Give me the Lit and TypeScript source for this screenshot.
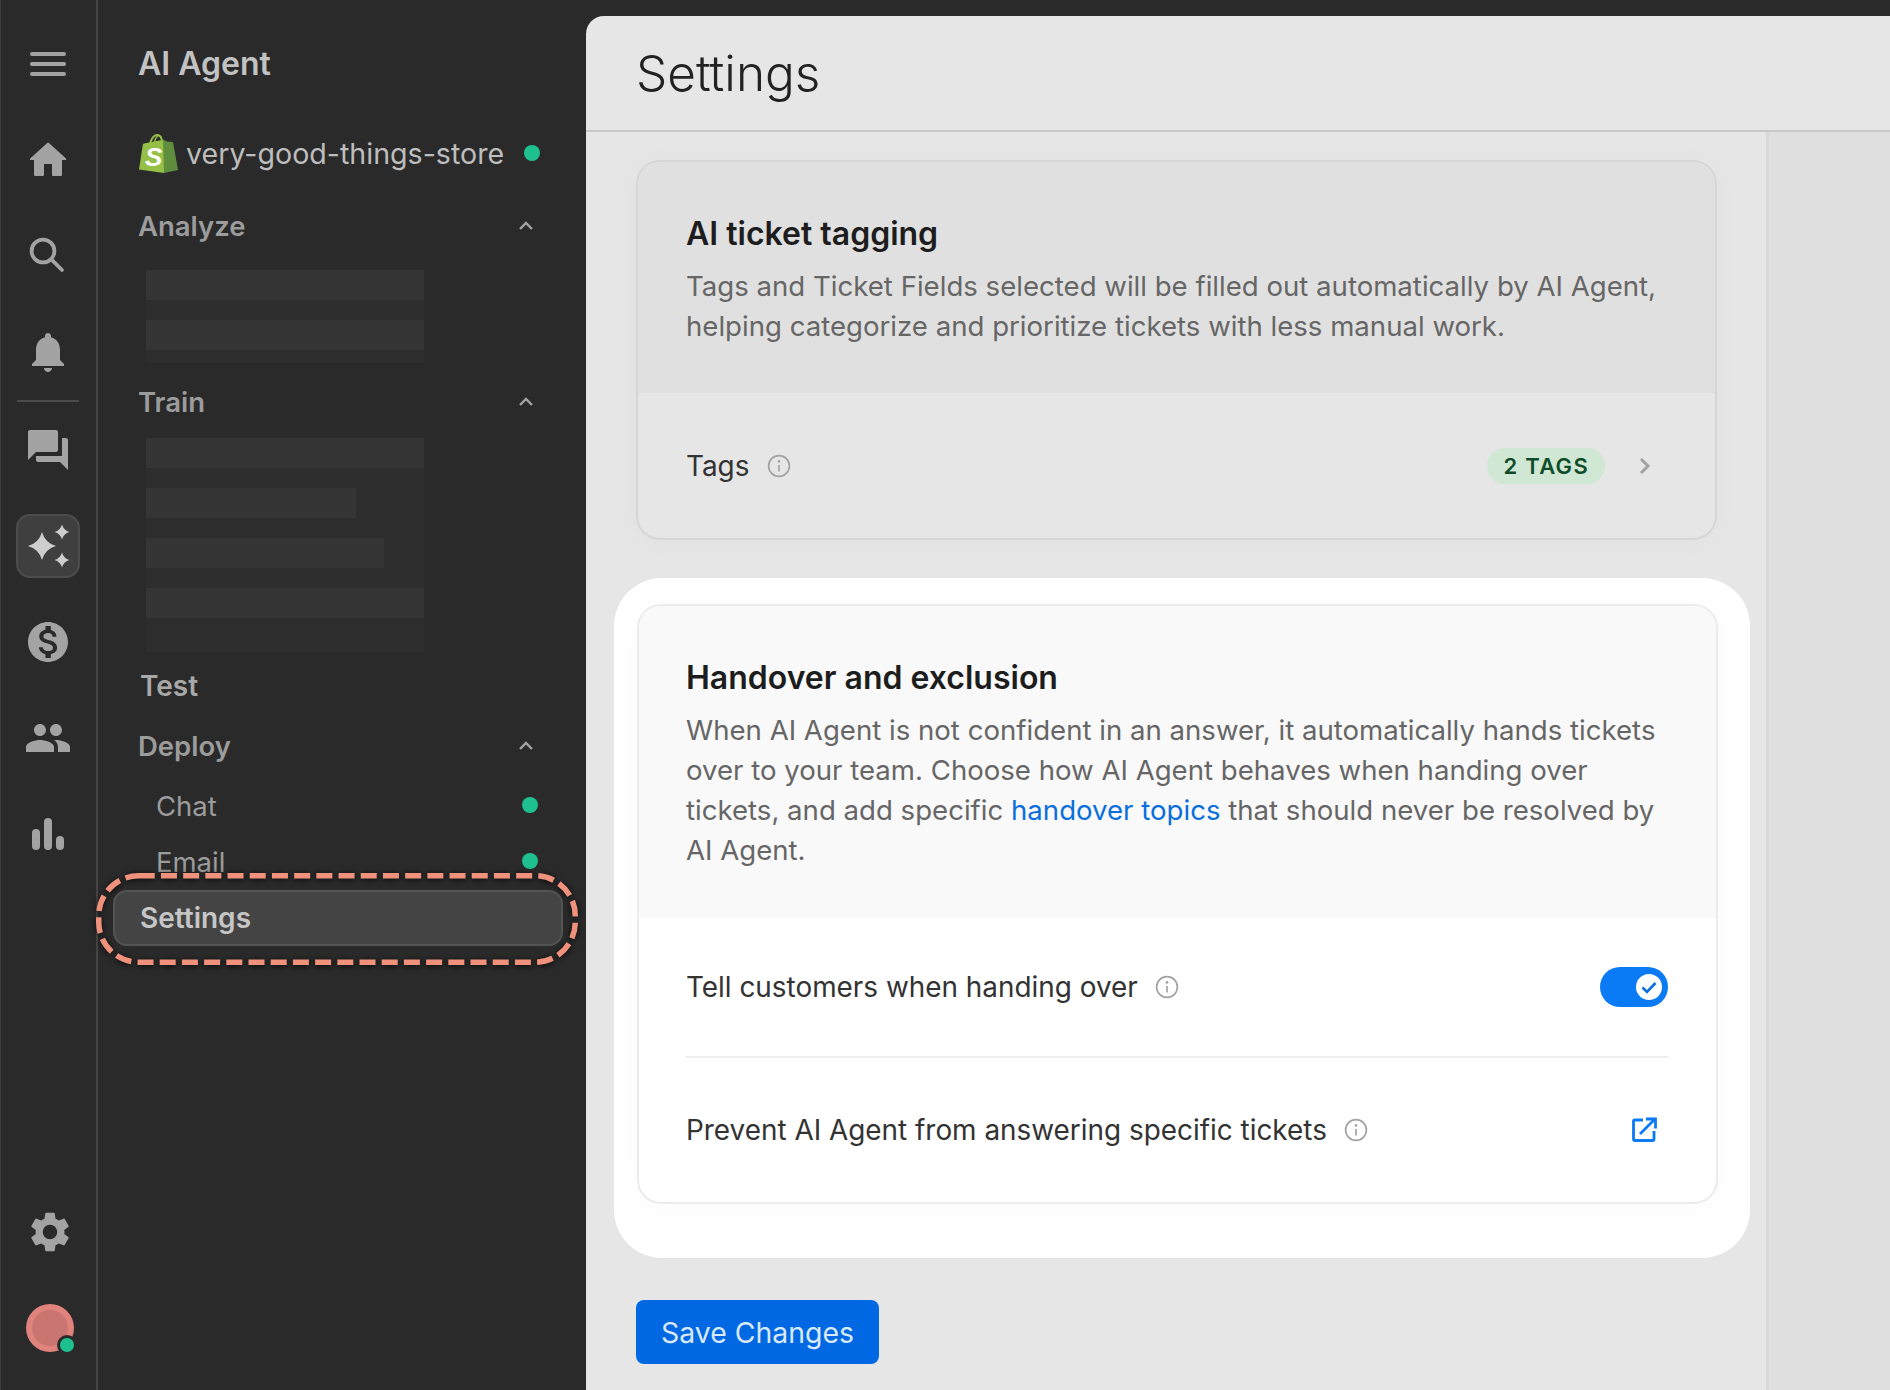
import { LitElement, css, html, svg } from 'lit'
import { customElement } from 'lit/decorators.js'

const icon = (d: string) => html`<svg class="ico" viewBox="0 0 24 24"><path d=${d}></path></svg>`

const HOME = 'M10 19.2v-5.2h4v5.2c0 .5.3.8.8.8h3.4c.5 0 .8-.3.8-.8V12h1.7c.4 0 .6-.5.3-.8l-8.4-7.6c-.3-.3-.8-.3-1.1 0l-8.4 7.6c-.3.3-.1.8.3.8H5v7.2c0 .5.3.8.8.8h3.4c.5 0 .8-.3.8-.8z'
const BELL = 'M12 22c1.1 0 2-.9 2-2h-4c0 1.1.89 2 2 2zm6-6v-5c0-3.07-1.64-5.64-4.5-6.32V4c0-.83-.67-1.5-1.5-1.5s-1.5.67-1.5 1.5v.68C7.63 5.36 6 7.92 6 11v5l-2 2v1h16v-1l-2-2z'
const FORUM = 'M21 6h-2v9H6v2c0 .55.45 1 1 1h11l4 4V7c0-.55-.45-1-1-1zm-4 6V3c0-.55-.45-1-1-1H3c-.55 0-1 .45-1 1v14l4-4h10c.55 0 1-.45 1-1z'
const DOLLAR = 'M12 2C6.48 2 2 6.48 2 12s4.48 10 10 10 10-4.48 10-10S17.52 2 12 2zm1.41 16.09V20h-2.67v-1.93c-1.71-.36-3.16-1.46-3.27-3.4h1.96c.1 1.05.82 1.87 2.65 1.87 1.96 0 2.4-.98 2.4-1.59 0-.83-.44-1.61-2.67-2.14-2.48-.6-4.18-1.62-4.18-3.67 0-1.72 1.39-2.84 3.11-3.21V4h2.67v1.95c1.86.45 2.79 1.86 2.85 3.39H14.3c-.05-1.11-.64-1.87-2.22-1.87-1.5 0-2.4.68-2.4 1.64 0 .84.65 1.39 2.67 1.91s4.18 1.39 4.18 3.91c-.01 1.83-1.38 2.83-3.12 3.16z'
const GROUP = 'M16 11c1.66 0 2.99-1.34 2.99-3S17.66 5 16 5c-1.66 0-3 1.34-3 3s1.34 3 3 3zm-8 0c1.66 0 2.99-1.34 2.99-3S9.66 5 8 5C6.34 5 5 6.34 5 8s1.34 3 3 3zm0 2c-2.33 0-7 1.17-7 3.5V19h14v-2.5c0-2.33-4.67-3.5-7-3.5zm8 0c-.29 0-.62.02-.97.05 1.16.84 1.97 1.97 1.97 3.45V19h6v-2.5c0-2.33-4.67-3.5-7-3.5z'
const GEAR = 'M19.14 12.94c.04-.3.06-.61.06-.94 0-.32-.02-.64-.07-.94l2.03-1.58c.18-.14.23-.41.12-.61l-1.92-3.32c-.12-.22-.37-.29-.59-.22l-2.39.96c-.5-.38-1.03-.7-1.62-.94l-.36-2.54c-.04-.24-.24-.41-.48-.41h-3.84c-.24 0-.43.17-.47.41l-.36 2.54c-.59.24-1.13.57-1.62.94l-2.39-.96c-.22-.08-.47 0-.59.22L2.74 8.87c-.12.21-.08.47.12.61l2.03 1.58c-.05.3-.09.63-.09.94s.02.64.07.94l-2.03 1.58c-.18.14-.23.41-.12.61l1.92 3.32c.12.22.37.29.59.22l2.39-.96c.5.38 1.03.7 1.62.94l.36 2.54c.05.24.24.41.48.41h3.84c.24 0 .44-.17.47-.41l.36-2.54c.59-.24 1.13-.56 1.62-.94l2.39.96c.22.08.47 0 .59-.22l1.92-3.32c.12-.22.07-.47-.12-.61l-2.01-1.58zM12 15.6c-1.98 0-3.6-1.62-3.6-3.6s1.62-3.6 3.6-3.6 3.6 1.62 3.6 3.6-1.62 3.6-3.6 3.6z'

const star = (cx: number, cy: number, r: number) => {
  const k = r * 0.22
  return svg`<path d="M${cx} ${cy - r}Q${cx + k} ${cy - k} ${cx + r} ${cy}Q${cx + k} ${cy + k} ${cx} ${cy + r}Q${cx - k} ${cy + k} ${cx - r} ${cy}Q${cx - k} ${cy - k} ${cx} ${cy - r}z"></path>`
}

const chevUp = html`<svg class="chev" viewBox="0 0 16 10"><path d="M2 8l6-6 6 6"></path></svg>`

const info = html`<svg class="info" viewBox="0 0 24 24">
  <circle cx="12" cy="12" r="10.4"></circle>
  <path d="M12 11v6.4"></path>
  <circle class="dot-i" cx="12" cy="7.4" r="1.3"></circle>
</svg>`

const skeleton = (widths: number[], height: number) => html`
  <div class="skeleton" style="height:${height}px">
    ${widths.map((w) => html`<div class="bar" style="width:${w}px"></div>`)}
  </div>
`

@customElement('app-root')
export class AppRoot extends LitElement {
  static styles = css`
    :host {
      display: flex;
      width: 1890px;
      height: 1390px;
      overflow: hidden;
      background: #2a2a2a;
      font-family: Inter, "Liberation Sans", sans-serif;
      box-sizing: border-box;
      border-left: 1px solid #3d3d3d;
    }
    * {
      box-sizing: border-box;
    }

    /* icon rail */
    .rail {
      width: 97px;
      flex: none;
      border-right: 2px solid #454545;
      display: flex;
      flex-direction: column;
      padding: 16px 1px 14px 0;
    }
    .slot {
      height: 96px;
      flex: none;
      display: flex;
      align-items: center;
      justify-content: center;
    }
    .ico {
      width: 48px;
      height: 48px;
      fill: #a3a3a3;
      display: block;
    }
    .burger {
      width: 36px;
      height: 24px;
      display: flex;
      flex-direction: column;
      justify-content: space-between;
    }
    .burger i {
      height: 4px;
      border-radius: 2px;
      background: #a3a3a3;
    }
    .rule {
      height: 2px;
      margin: 0 16px;
      background: #4a4a4a;
      flex: none;
    }
    .tile {
      width: 64px;
      height: 64px;
      border-radius: 14px;
      background: #3f3f3f;
      border: 2px solid #4c4c4c;
      display: flex;
      align-items: center;
      justify-content: center;
    }
    .tile svg {
      width: 64px;
      height: 64px;
      flex: none;
      fill: #cdcdcd;
    }
    .search {
      width: 48px;
      height: 48px;
      fill: none;
      stroke: #a3a3a3;
      stroke-width: 1.9;
      stroke-linecap: round;
    }
    .bars {
      width: 32px;
      height: 32px;
      display: flex;
      align-items: flex-end;
      justify-content: space-between;
    }
    .bars i {
      width: 8px;
      border-radius: 4px;
      background: #a3a3a3;
    }
    .spring {
      flex: 1;
    }
    .gear {
      margin-left: 4px;
    }
    .avatar {
      position: relative;
      width: 48px;
      height: 48px;
      margin-left: 4px;
      border-radius: 50%;
      background: #e0837c;
      display: flex;
      align-items: center;
      justify-content: center;
    }
    .avatar::before {
      content: "";
      width: 36px;
      height: 36px;
      border-radius: 50%;
      background: #c97670;
    }
    .avatar::after {
      content: "";
      position: absolute;
      right: 0;
      bottom: 0;
      width: 14px;
      height: 14px;
      border-radius: 50%;
      background: #1fc08f;
      box-shadow: 0 0 0 3px #2a2a2a;
    }

    /* navigation */
    .side {
      width: 488px;
      flex: none;
      padding: 39px 23px 0 40px;
      display: flex;
      flex-direction: column;
      color: #9c9c9c;
      font-size: 27.5px;
    }
    .title {
      height: 49px;
      line-height: 50px;
      font-size: 32px;
      font-weight: 600;
      color: #c2c2c2;
    }
    .store {
      height: 60px;
      margin-top: 35px;
      display: flex;
      align-items: center;
      color: #bdbdbd;
      white-space: nowrap;
      font-size: 28.6px;
    }
    .store svg {
      width: 40px;
      height: 40px;
      margin-right: 8px;
      flex: none;
    }
    .live {
      width: 16px;
      height: 16px;
      border-radius: 50%;
      background: #1fc08f;
      flex: none;
    }
    .store .live {
      margin-left: 20px;
    }
    .sub .live {
      margin-top: -2px;
    }
    .group {
      height: 48px;
      display: flex;
      align-items: center;
      justify-content: space-between;
      font-weight: 600;
      padding: 0 29px 2px 0;
    }
    .chev {
      width: 16px;
      height: 10px;
      fill: none;
      stroke: #a3a3a3;
      stroke-width: 2.4;
    }
    .skeleton {
      margin-left: 8px;
      width: 278px;
      background: #2d2d2d;
      display: flex;
      flex-direction: column;
      gap: 20px;
      flex: none;
    }
    .bar {
      height: 30px;
      background: #353535;
    }
    .test {
      padding-left: 2px;
      color: #a8a8a8;
      font-size: 28px;
    }
    .sub {
      height: 56px;
      display: flex;
      align-items: center;
      justify-content: space-between;
      padding: 0 25px 0 18px;
    }
    .current {
      position: relative;
      height: 56px;
      margin-left: -25px;
      margin-right: 0;
      padding-left: 25px;
      border-radius: 14px;
      border: 2px solid #545454;
      background: #444444;
      display: flex;
      align-items: center;
      font-weight: 600;
      font-size: 28px;
      color: #c6c6c6;
    }
    .mark {
      position: absolute;
      left: -19px;
      top: -19px;
      width: 482px;
      height: 92px;
      overflow: visible;
      filter: drop-shadow(0 1px 3px rgba(0, 0, 0, 0.85));
    }
    .mark rect {
      fill: none;
      stroke: #f0917c;
      stroke-width: 5.5;
      stroke-dasharray: 16 6.2;
    }

    /* main panel */
    .main {
      flex: 1;
      min-width: 0;
      border-top-left-radius: 18px;
      margin-top: 16px;
      background: #e6e6e6;
      display: flex;
      flex-direction: column;
    }
    .head {
      height: 116px;
      flex: none;
      padding: 0 0 1px 50px;
      border-bottom: 2px solid #c8c8c8;
      display: flex;
      align-items: center;
      font-size: 49.5px;
      font-weight: 350;
      color: #222222;
    }
    .body {
      flex: 1;
      display: flex;
      min-height: 0;
    }
    .content {
      width: 1183px;
      flex: none;
      padding: 28px 0 0 28px;
      border-right: 3px solid #d8d8d8;
    }
    .sideband {
      flex: 1;
      background: #dfdfdf;
    }
    .card {
      margin-left: 22px;
      width: 1081px;
      border: 2px solid #d6d6d6;
      border-radius: 24px;
      overflow: hidden;
      background: #e6e6e6;
      box-shadow: 0 2px 30px rgba(0, 0, 0, 0.025);
    }
    .card-head {
      background: #e0e0e0;
      padding: 52px 48px 47px;
    }
    .card h2 {
      margin: 0 0 12px;
      font-size: 32px;
      line-height: 40px;
      font-weight: 600;
      color: #1d1d1d;
    }
    .card p {
      margin: 0;
      font-size: 27.6px;
      line-height: 40px;
      color: #666666;
    }
    .row {
      display: flex;
      align-items: center;
      margin: 0 48px 0 48px;
      font-size: 27.9px;
      color: #333333;
    }
    .row .info {
      margin-left: 18px;
    }
    .row .push {
      margin-left: auto;
    }
    .tags {
      height: 145px;
      margin-right: 64px;
    }
    .info {
      width: 24px;
      height: 24px;
      flex: none;
      fill: none;
      stroke: #a3a3a3;
      stroke-width: 1.7;
    }
    .dot-i {
      fill: #a3a3a3;
      stroke: none;
    }
    .badge {
      height: 36px;
      border-radius: 18px;
      background: #cfe7d3;
      color: #0f4d2a;
      font-size: 22px;
      font-weight: 600;
      letter-spacing: 1.3px;
      padding: 0 16px;
      display: flex;
      align-items: center;
    }
    .go {
      width: 12px;
      height: 20px;
      margin-left: 34px;
      fill: none;
      stroke: #a3a3a3;
      stroke-width: 3;
    }
    .spot {
      margin-top: 38px;
      width: 1136px;
      height: 680px;
      padding-top: 26px;
      background: #ffffff;
      border-radius: 48px;
    }
    .spot .card {
      margin-left: 23px;
      width: 1081px;
      background: #ffffff;
      border-color: #ececec;
    }
    .spot .card-head {
      background: #f9f9f9;
      padding: 52px 47px 48px;
    }
    .spot a {
      color: #0a6fdc;
      text-decoration: none;
    }
    .spot .row {
      height: 138px;
      margin: 0 48px 0 47px;
    }
    .spot .row .info {
      margin-left: 17px;
    }
    .spot .row + .row {
      height: 146px;
      border-top: 2px solid #eeeeee;
    }
    .switch {
      width: 68px;
      height: 40px;
      border-radius: 20px;
      background: #0a7bf5;
      display: flex;
      align-items: center;
      justify-content: flex-end;
      padding-right: 6px;
    }
    .switch svg {
      width: 26px;
      height: 26px;
    }
    .ext {
      width: 26px;
      height: 26px;
      margin-right: 11px;
      fill: none;
      stroke: #0a7bf5;
      stroke-width: 2.8;
    }
    .save {
      margin: 42px 0 0 22px;
      width: 243px;
      height: 64px;
      border: 0;
      border-radius: 8px;
      background: #0068e3;
      color: #d9e9fc;
      font: 400 28.4px Inter, "Liberation Sans", sans-serif;
      display: block;
    }
  `

  render() {
    return html`
      <div class="rail">
        <div class="slot"><div class="burger"><i></i><i></i><i></i></div></div>
        <div class="slot">${icon(HOME)}</div>
        <div class="slot">
          <svg class="search" viewBox="0 0 24 24"><circle cx="9.500" cy="9.500" r="5.700"></circle><path d="M13.800 13.800l5.200 5.200"></path></svg>
        </div>
        <div class="slot">${icon(BELL)}</div>
        <div class="rule"></div>
        <div class="slot">${icon(FORUM)}</div>
        <div class="slot">
          <div class="tile">
            <svg viewBox="0 0 64 64">${star(26, 32, 14)}${star(46, 18, 7.5)}${star(46, 46, 7.5)}</svg>
          </div>
        </div>
        <div class="slot">${icon(DOLLAR)}</div>
        <div class="slot">${icon(GROUP)}</div>
        <div class="slot"><div class="bars"><i style="height:21px"></i><i style="height:32px"></i><i style="height:14px"></i></div></div>
        <div class="spring"></div>
        <div class="slot"><div class="gear">${icon(GEAR)}</div></div>
        <div class="slot"><div class="avatar"></div></div>
      </div>

      <div class="side">
        <div class="title">AI Agent</div>
        <div class="store">
          <svg viewBox="0 0 40 40">
            <path fill="none" stroke="#95bf47" stroke-width="2" d="M12 11c1-5 4-9 7-9s5 3 5 8"></path>
            <path fill="none" stroke="#95bf47" stroke-width="1.400" d="M16 10c1-3 2.500-7 4-7"></path>
            <path fill="#95bf47" d="M24 7L6 10.500C5 11 5 11 4.800 12L1 36.500 26 40 28 9z"></path>
            <path fill="#5e8e3e" d="M25 6.500L26 40l14-3L35 9l-6-.5z"></path>
            <text x="7" y="33" font-family="Liberation Sans" font-size="26" font-weight="700" font-style="italic" fill="#ffffff">S</text>
          </svg>
          very-good-things-store
          <span class="live"></span>
        </div>
        <div class="group" style="margin-top:20px">Analyze ${chevUp}</div>
        <div style="margin-top:19px">${skeleton([278, 278], 93)}</div>
        <div class="group" style="margin-top:16px">Train ${chevUp}</div>
        <div style="margin-top:11px">${skeleton([278, 210, 238, 278], 214)}</div>
        <div class="group test" style="margin-top:11px">Test</div>
        <div class="group" style="margin-top:12px">Deploy ${chevUp}</div>
        <div class="sub" style="margin-top:7px">Chat <span class="live"></span></div>
        <div class="sub">Email <span class="live"></span></div>
        <div class="current">
          Settings
          <svg class="mark" viewBox="0 0 482 92">
            <rect x="2.750" y="2.750" width="476.500" height="86.500" rx="40" ry="40"></rect>
          </svg>
        </div>
      </div>

      <div class="main">
        <div class="head">Settings</div>
        <div class="body">
          <div class="content">
            <section class="card">
              <div class="card-head">
                <h2>AI ticket tagging</h2>
                <p>Tags and Ticket Fields selected will be filled out automatically by AI Agent, helping categorize and prioritize tickets with less manual work.</p>
              </div>
              <div class="row tags">
                Tags ${info}
                <span class="badge push">2 TAGS</span>
                <svg class="go" viewBox="0 0 12 20"><path d="M2 3l7 7-7 7"></path></svg>
              </div>
            </section>

            <div class="spot">
              <section class="card">
                <div class="card-head">
                  <h2>Handover and exclusion</h2>
                  <p>When AI Agent is not confident in an answer, it automatically hands tickets over to your team. Choose how AI Agent behaves when handing over tickets, and add specific <a href="#">handover topics</a> that should never be resolved by AI Agent.</p>
                </div>
                <div class="row">
                  Tell customers when handing over ${info}
                  <span class="switch push">
                    <svg viewBox="0 0 26 26">
                      <circle cx="13" cy="13" r="13" fill="#ffffff"></circle>
                      <path d="M6.500 13.500l4.500 4.500 8.500-9" fill="none" stroke="#0a6fdc" stroke-width="2.600"></path>
                    </svg>
                  </span>
                </div>
                <div class="row">
                  Prevent AI Agent from answering specific tickets ${info}
                  <svg class="ext push" viewBox="0 0 26 26">
                    <path d="M12 3H3.500a1 1 0 0 0-1 1v18.500a1 1 0 0 0 1 1H22a1 1 0 0 0 1-1V14"></path>
                    <path d="M9 17L23 3M15 2h9.500v9.500"></path>
                  </svg>
                </div>
              </section>
            </div>

            <button class="save">Save Changes</button>
          </div>
          <div class="sideband"></div>
        </div>
      </div>
    `
  }
}
